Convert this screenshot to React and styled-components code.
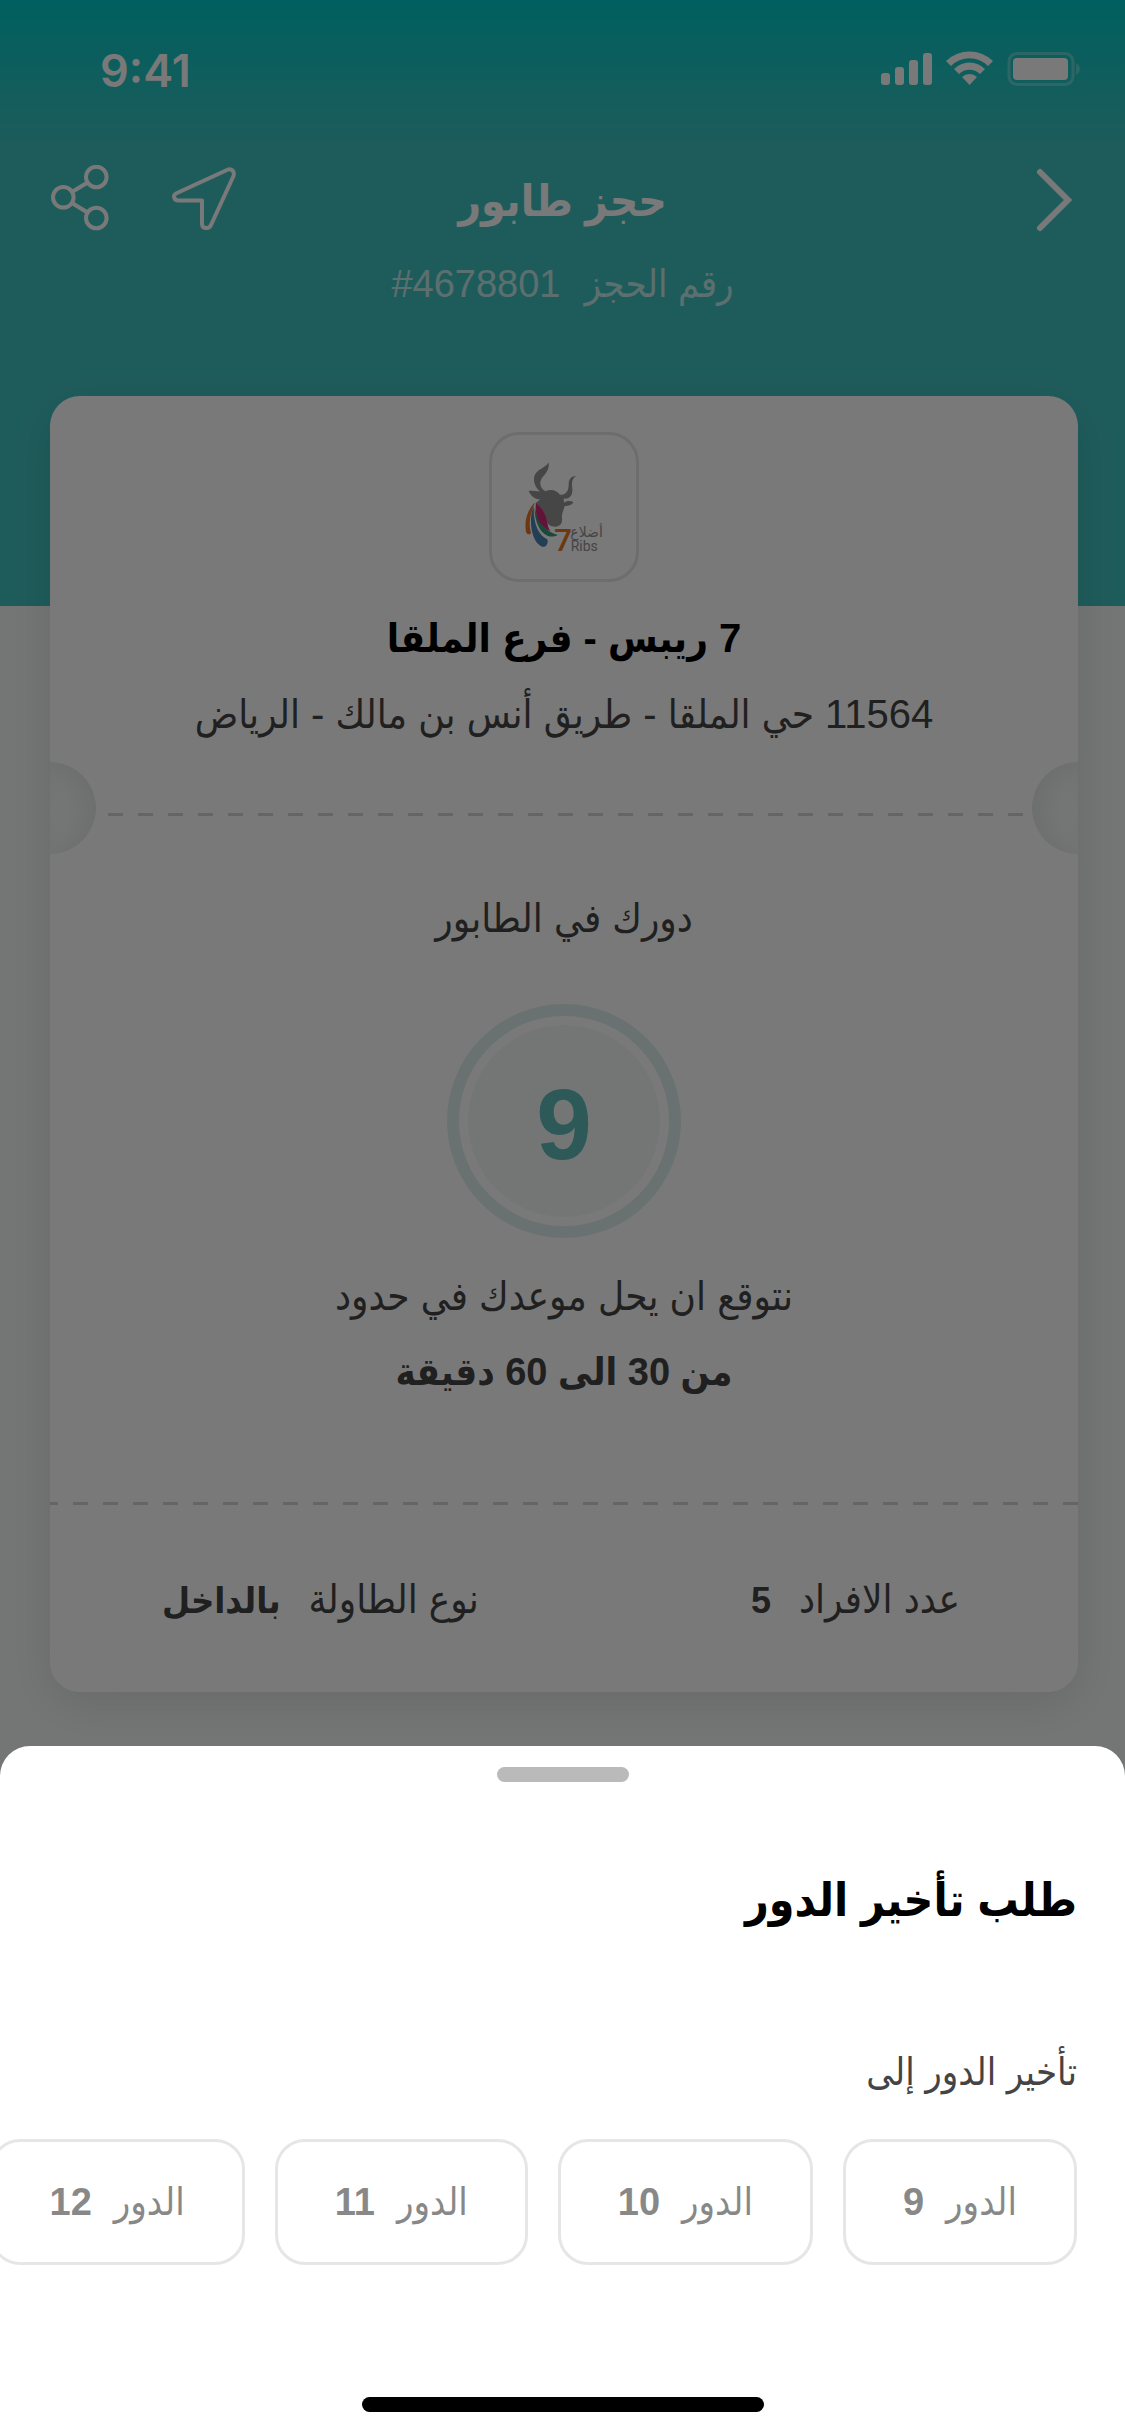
import React from 'react'
import styled, { createGlobalStyle } from 'styled-components'

const GlobalStyle = createGlobalStyle`
    * {
        box-sizing: border-box;
    }

    body {
        margin: 0;
        background-color: #f4f9f7;
        font-family: "Liberation Sans", "DejaVu Sans Condensed", "DejaVu Sans", sans-serif;
    }

    h1, h2, p, dl, dd {
        margin: 0;
    }
`

const Page = styled.div`
    position: relative;
    display: flex;
    flex-direction: column;
    min-height: 100vh;
    overflow: hidden;
    background: linear-gradient(#00cac8, #41c2c0 155px, #41c2c0 606px, #f4f9f7 606px);
`

const StatusBar = styled.div`
    display: flex;
    align-items: center;
    justify-content: space-between;
    height: 138px;
    padding: 0 43px 0 100px;
    color: #fff;
    direction: ltr;
`

const Time = styled.span`
    padding-top: 2px;
    font-family: Inter, sans-serif;
    font-size: 45px;
    font-weight: 600;
`

const Header = styled.header`
    display: grid;
    grid-template-columns: 1fr auto 1fr;
    align-items: center;
    height: 120px;
    padding: 0 50px;
    color: #fff;
`

const IconButton = styled.button`
    display: flex;
    padding: 0;
    border: 0;
    background: none;
    color: inherit;
`

const Actions = styled.div`
    display: flex;
    justify-content: flex-end;
    gap: 62px;
`

const Title = styled.h1`
    padding-top: 6px;
    font-size: 44px;
    line-height: 64px;
`

const BookingNumber = styled.p`
    display: flex;
    justify-content: center;
    gap: 24px;
    height: 138px;
    padding-top: 4px;
    font-size: 38px;
    line-height: 44px;
    color: rgba(255, 255, 255, 0.7);
`

const Ticket = styled.main`
    display: flex;
    flex-direction: column;
    margin: 0 47px 0 50px;
    border-radius: 30px;
    background-color: #fff;
    box-shadow: 0 12px 48px rgba(0, 0, 0, 0.1);
    text-align: center;
`

const Venue = styled.section`
    display: flex;
    flex-direction: column;
    align-items: center;
    height: 366px;
    padding-top: 36px;
`

const LogoBox = styled.div`
    width: 150px;
    height: 150px;
    border: 3px solid #e6e6e6;
    border-radius: 30px;
`

const VenueName = styled.h2`
    margin: 24px 0 12px;
    font-size: 40px;
    line-height: 64px;
`

const Text = styled.p`
    font-size: 40px;
    line-height: 64px;
    color: #444;
`

const WaitTime = styled(Text)`
    margin-top: 12px;
    font-size: 38px;
    font-weight: 700;
`

const Tear = styled.div`
    display: flex;
    align-items: center;
    justify-content: space-between;
    height: 92px;
`

const Notch = styled.span`
    width: 46px;
    height: 92px;
    border-radius: ${props => props.$end ? '0 46px 46px 0' : '46px 0 0 46px'};
    background-color: #f4f9f7;
    box-shadow: ${props => props.$end ? 'inset -12px 4px 24px' : 'inset 12px 4px 24px'} rgba(0, 0, 0, 0.06);
`

const Dashes = styled.hr`
    width: 100%;
    height: 3px;
    margin: 0;
    border: 0;
    background: repeating-linear-gradient(-90deg, #d4d4d4 0 15px, transparent 15px 30px);
`

const TearDashes = styled(Dashes)`
    flex: 1;
    margin: 12px 9px 0;
`

const Queue = styled.section`
    display: flex;
    flex-direction: column;
    align-items: center;
    height: 648px;
    padding-top: 32px;
`

const Ring = styled.div`
    display: flex;
    width: 234px;
    height: 234px;
    margin: 54px 0 26px;
    padding: 9px;
    border: 12px solid #dff1ee;
    border-radius: 50%;
`

const Turn = styled.strong`
    flex: 1;
    border-radius: 50%;
    background-color: #f4f9f7;
    color: #5fbcb9;
    font-size: 100px;
    line-height: 198px;
`

const Details = styled.dl`
    display: flex;
    align-items: center;
    justify-content: space-between;
    height: 187px;
    padding: 0 118px 0 112px;
    font-size: 40px;
    color: #444;
`

const Detail = styled.div`
    display: flex;
    align-items: baseline;
    gap: 28px;

    dd {
        font-size: 36px;
        font-weight: 700;
    }
`

const Overlay = styled.div`
    position: absolute;
    inset: 0;
    display: flex;
    align-items: flex-end;
    background-color: rgba(0, 0, 0, 0.525);
`

const Sheet = styled.section`
    display: flex;
    flex-direction: column;
    width: 100%;
    height: 690px;
    padding: 21px 48px 24px;
    border-radius: 30px 30px 0 0;
    background-color: #fff;
`

const Handle = styled.div`
    align-self: center;
    width: 132px;
    height: 15px;
    border-radius: 8px;
    background-color: #bababa;
`

const SheetTitle = styled.h2`
    margin-top: 82px;
    font-size: 46px;
    line-height: 72px;
`

const SheetLabel = styled.p`
    margin: 106px 0 37px;
    font-size: 38px;
    line-height: 60px;
    color: #444;
`

const Options = styled.div`
    display: flex;
    gap: 30px;
`

const Option = styled.button`
    display: flex;
    flex-shrink: 0;
    align-items: center;
    justify-content: center;
    gap: 22px;
    height: 126px;
    padding: 0 57px;
    border: 3px solid #e6e6e6;
    border-radius: 30px;
    background-color: #fff;
    color: #888;
    font-family: inherit;
    font-size: 38px;
`

const HomeIndicator = styled.div`
    align-self: center;
    width: 402px;
    height: 15px;
    margin-top: auto;
    border-radius: 8px;
    background-color: #000;
`

const StatusIcons = () => (
    <svg width="201" height="36" viewBox="0 0 201 36" fill="currentColor">
        <rect x="0" y="22" width="9" height="12" rx="3" />
        <rect x="14" y="16" width="9" height="18" rx="3" />
        <rect x="28" y="9" width="9" height="25" rx="3" />
        <rect x="42" y="2" width="9" height="32" rx="3" />
        <path d="M65 10A34 34 0 0 1 112 10L107 15A26 26 0 0 0 70 15Z" />
        <path d="M73 18A22 22 0 0 1 104 18L99 23A15 15 0 0 0 78 23Z" />
        <path d="M81 26A11 11 0 0 1 96 26L88.5 34Z" />
        <rect x="128" y="2.5" width="64" height="31" rx="8" fill="none" stroke="currentColor" strokeWidth="3" opacity="0.3" />
        <rect x="132" y="7" width="55" height="22" rx="4" />
        <path d="M195 12Q203 18 195 24Z" opacity="0.3" />
    </svg>
)

const ChevronIcon = () => (
    <svg width="42" height="70" viewBox="0 0 42 70" fill="none" stroke="currentColor" strokeWidth="6" strokeLinecap="round">
        <path d="M7 9L35 37L7 65" />
    </svg>
)

const SendIcon = () => (
    <svg width="66" height="66" viewBox="0 0 66 66" fill="none" stroke="currentColor" strokeWidth="4" strokeLinejoin="round">
        <path d="M55 5L5 28C0 30 2 36 7 35.5L30 35.5L30 59C30 64 37 64.5 39 60L61.5 11C63 6 59 3 55 5Z" />
    </svg>
)

const ShareIcon = () => (
    <svg width="60" height="66" viewBox="0 0 60 66" fill="none" stroke="currentColor" strokeWidth="4">
        <circle cx="13.3" cy="32.3" r="10.3" />
        <circle cx="46.3" cy="12" r="10.3" />
        <circle cx="46.3" cy="53" r="10.3" />
        <path d="M22 27L37.5 17.5M22 38L37.5 47.5" />
    </svg>
)

const Logo = () => (
    <svg width="144" height="144" viewBox="-92 -45 432 432">
        <path d="M78 37C70 55 34 58 34 88C34 104 42 116 52 124C42 124 30 122 18 122C24 138 36 148 52 148C44 156 40 158 38 160C48 168 62 178 68 200C72 218 78 230 98 230C112 230 120 220 118 204C116 190 124 180 126 168C136 168 148 166 152 156C142 152 132 152 124 158C124 154 124 150 122 146C146 148 152 130 148 108C147 94 150 84 160 78C142 78 138 92 138 104C138 124 128 136 112 134C102 120 84 116 68 124C56 116 50 104 54 92C60 76 82 66 78 37Z" fill="#939393" />
        <path d="M34 160C14 182 4 212 10 246C14 256 24 254 25 248C16 220 24 190 36 160Z" fill="#e67427" />
        <path d="M33 168C16 210 26 276 58 290C70 293 78 280 74 268C46 254 32 222 33 168Z" fill="#4c83b6" />
        <path d="M36 172C34 224 66 276 105 255C70 246 44 215 36 172Z" fill="#359c79" />
        <path d="M40 160C34 200 54 232 84 244C75 234 76 222 72 210C68 188 56 172 40 160Z" fill="#cc2c75" />
        <text x="94" y="303" direction="ltr" fontFamily="Open Sans" fontWeight="600" fontSize="94" fill="#e67427">7</text>
        <text x="143" y="262" direction="rtl" textAnchor="end" fontFamily="DejaVu Sans" fontSize="42" fill="#929292">أضلاع</text>
        <text x="144" y="304" direction="ltr" fontFamily="Roboto" fontSize="42" fill="#929292">Ribs</text>
    </svg>
)

const turns = [9, 10, 11, 12]

const App = () => {
  return (
    <Page dir="rtl" lang="ar">
        <GlobalStyle/>

        <StatusBar>
            <Time>9:41</Time>
            <StatusIcons/>
        </StatusBar>

        <Header>
            <IconButton aria-label="رجوع"><ChevronIcon/></IconButton>
            <Title>حجز طابور</Title>
            <Actions>
                <IconButton aria-label="الموقع"><SendIcon/></IconButton>
                <IconButton aria-label="مشاركة"><ShareIcon/></IconButton>
            </Actions>
        </Header>

        <BookingNumber>
            <span>رقم الحجز</span>
            <span>#4678801</span>
        </BookingNumber>

        <Ticket>
            <Venue>
                <LogoBox><Logo/></LogoBox>
                <VenueName>7 ريبس - فرع الملقا</VenueName>
                <Text>11564 حي الملقا - طريق أنس بن مالك - الرياض</Text>
            </Venue>

            <Tear>
                <Notch/>
                <TearDashes/>
                <Notch $end/>
            </Tear>

            <Queue>
                <Text>دورك في الطابور</Text>
                <Ring>
                    <Turn>9</Turn>
                </Ring>
                <Text>نتوقع ان يحل موعدك في حدود</Text>
                <WaitTime>من 30 الى 60 دقيقة</WaitTime>
            </Queue>

            <Dashes/>

            <Details>
                <Detail>
                    <dt>عدد الافراد</dt>
                    <dd>5</dd>
                </Detail>
                <Detail>
                    <dt>نوع الطاولة</dt>
                    <dd>بالداخل</dd>
                </Detail>
            </Details>
        </Ticket>

        <Overlay>
            <Sheet>
                <Handle/>
                <SheetTitle>طلب تأخير الدور</SheetTitle>
                <SheetLabel>تأخير الدور إلى</SheetLabel>
                <Options>
                    {turns.map(turn => (
                        <Option key={turn}>
                            <span>الدور</span>
                            <strong>{turn}</strong>
                        </Option>
                    ))}
                </Options>
                <HomeIndicator/>
            </Sheet>
        </Overlay>
    </Page>
  )
}

export default App
